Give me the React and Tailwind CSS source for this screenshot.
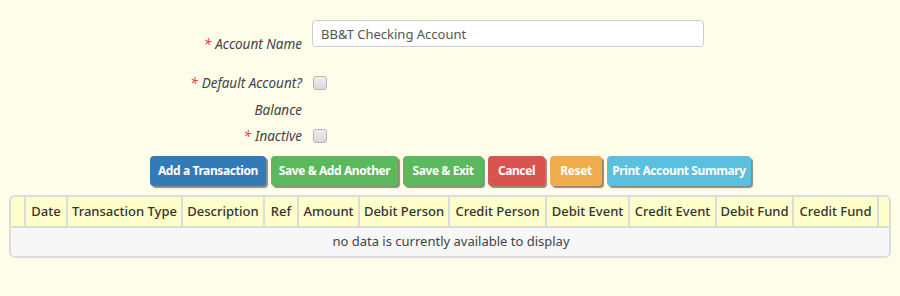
const columns = [
  { label: "", width: 14 },
  { label: "Date", width: 42 },
  { label: "Transaction Type", width: 115 },
  { label: "Description", width: 82 },
  { label: "Ref", width: 34 },
  { label: "Amount", width: 61 },
  { label: "Debit Person", width: 90 },
  { label: "Credit Person", width: 97 },
  { label: "Debit Event", width: 83 },
  { label: "Credit Event", width: 87 },
  { label: "Debit Fund", width: 77 },
  { label: "Credit Fund", width: 85 },
  { label: "", width: 13 }
];

const buttons = [
  { label: "Add a Transaction", className: "w-[116px] bg-[#337ab7]" },
  { label: "Save & Add Another", className: "w-[127px] bg-[#5cb85c]" },
  { label: "Save & Exit", className: "w-[80px] bg-[#5cb85c]" },
  { label: "Cancel", className: "w-[57px] bg-[#d9534f]" },
  { label: "Reset", className: "w-[52px] bg-[#f0ad4e]" },
  { label: "Print Account Summary", className: "w-[144px] bg-[#5bc0de]" }
];

const Label = ({ children, required, className = "" }) => (
  <span className={`w-[302px] shrink-0 text-right text-[13.5px] leading-[20px] italic text-[#444] ${className}`}>
    {required && <span className="mr-1 text-[#e33]">*</span>}
    {children}
  </span>
);

const Checkbox = () => (
  <span className="ml-[11px] inline-block h-[14px] w-[14px] rounded-[3px] border border-[#b5b5b5] bg-gradient-to-b from-[#efefef] to-[#d9d9d9]" />
);

export default function App() {
  return (
    <div className="h-[296px] w-[900px] bg-[#fdfdea] pt-[20px] font-['Noto_Sans',sans-serif]">
      <div className="flex h-[34px] items-start">
        <Label required className="pt-[14px]">
          Account Name
        </Label>
        <input
          defaultValue="BB&T Checking Account"
          className="ml-[10px] h-[27px] w-[392px] rounded-[4px] border border-[#ccc] bg-white px-[8px] text-[13px] text-[#555] outline-none"
        />
      </div>

      <div className="mt-[19px] flex h-[20px] items-center">
        <Label required>Default Account?</Label>
        <Checkbox />
      </div>

      <div className="mt-[7px] flex h-[20px] items-center">
        <Label>Balance</Label>
      </div>

      <div className="mt-[6px] flex h-[20px] items-center">
        <Label required>Inactive</Label>
        <Checkbox />
      </div>

      <div className="mt-[10px] flex gap-[5px] pl-[150px]">
        {buttons.map((button) => (
          <button
            key={button.label}
            type="button"
            className={`h-[30px] rounded-[4px] text-[12px] font-bold tracking-[-0.4px] text-white shadow-[2px_2px_1px_rgba(0,0,0,0.45)] ${button.className}`}
          >
            {button.label}
          </button>
        ))}
      </div>

      <div className="mx-[9px] mt-[9px] overflow-hidden rounded-[6px] border-2 border-[#dcdcdc]">
        <table className="w-full table-fixed border-collapse text-[13px] text-[#333]">
          <colgroup>
            {columns.map((column, index) => (
              <col key={index} style={{ width: column.width }} />
            ))}
          </colgroup>
          <thead>
            <tr className="h-[30px] bg-[#fefecb]">
              {columns.map((column, index) => (
                <th
                  key={index}
                  className="whitespace-nowrap border-x-2 border-b-2 border-[#dcdcdc] px-0 text-center font-medium first:border-l-0 last:border-r-0"
                >
                  {column.label}
                </th>
              ))}
            </tr>
          </thead>
          <tbody>
            <tr className="h-[29px] bg-[#f7f7f7]">
              <td colSpan={columns.length} className="text-center text-[13px] text-[#444]">
                no data is currently available to display
              </td>
            </tr>
          </tbody>
        </table>
      </div>
    </div>
  );
}
